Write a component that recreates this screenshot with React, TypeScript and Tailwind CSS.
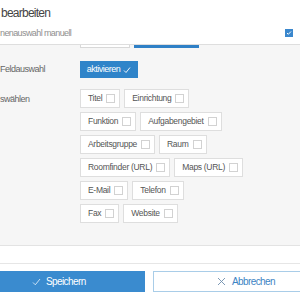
import React from "react";

const Box = () => <span className="inline-block w-[9px] h-[9px] border border-[#d2d2d2] bg-white shrink-0" />;

const Chip = ({ label }: { label: string }) => (
  <div className="h-[19px] flex items-center gap-[4px] pl-[7px] pr-[4px] border border-[#dedede] bg-white text-[8.5px] tracking-[-0.3px] text-[#555]">
    <span>{label}</span>
    <Box />
  </div>
);

const rows: string[][] = [
  ["Titel", "Einrichtung"],
  ["Funktion", "Aufgabengebiet"],
  ["Arbeitsgruppe", "Raum"],
  ["Roomfinder (URL)", "Maps (URL)"],
  ["E-Mail", "Telefon"],
  ["Fax", "Website"],
];

export default function App() {
  return (
    <div className="w-[300px] h-[300px] overflow-hidden bg-white relative" style={{ fontFamily: '"Liberation Sans", Arial, sans-serif' }}>
      {/* header */}
      <div className="h-[45px] border-b border-[#dedede] pl-[1px] pr-[7px]">
        <div className="pt-[5px] text-[12px] tracking-[-0.75px] text-[#444] leading-[16px]">bearbeiten</div>
        <div className="mt-[7px] flex items-center justify-between">
          <span className="text-[9px] tracking-[-0.6px] text-[#8f8f8f] leading-[10px] -ml-[1px]">nenauswahl manuell</span>
          <span className="w-[8px] h-[8px] bg-[#3a87cd] flex items-center justify-center">
            <svg width="6" height="6" viewBox="0 0 6 6"><path d="M1 3l1.3 1.3L5 1.5" stroke="white" strokeWidth="1" fill="none" /></svg>
          </span>
        </div>
      </div>
      {/* grey body */}
      <div className="h-[201px] bg-[#f6f6f6] border-b border-[#e3e3e3]">
        <div className="flex pl-[80px] gap-[4px]">
          <div className="w-[50px] h-[3px] bg-white border border-t-0 border-[#d8d8d8]" />
          <div className="w-[65px] h-[3px] bg-[#2f80c6]" />
        </div>
        <div className="mt-[13px] flex items-center h-[17px]">
          <div className="w-[80px] text-[9px] tracking-[-0.5px] text-[#666]">Feldauswahl</div>
          <div className="h-[17px] w-[58px] bg-[#2f84c9] flex items-center justify-center gap-[3px] text-white text-[9px] tracking-[-0.5px]">
            <span>aktivieren</span>
            <svg width="8" height="8" viewBox="0 0 8 8"><path d="M1 4.5l2 2L7 1.5" stroke="white" strokeWidth="0.9" fill="none" /></svg>
          </div>
        </div>
        <div className="mt-[11px] flex">
          <div className="w-[80px] text-[9px] tracking-[-0.5px] text-[#666] pt-[4px]">swählen</div>
          <div className="flex flex-col gap-[4px]">
            {rows.map((r, i) => (
              <div key={i} className="flex gap-[4px]">
                {r.map((l) => (
                  <Chip key={l} label={l} />
                ))}
              </div>
            ))}
          </div>
        </div>
      </div>
      {/* footer */}
      <div className="h-[17px]" />
      <div className="border-t border-[#e6e6e6] pt-[7px] flex gap-[8px]">
        <button className="w-[145px] h-[21px] bg-[#3a8bcf] flex items-center gap-[5px] pl-[32px] text-white text-[10px] tracking-[-0.6px]">
          <svg width="9" height="8" viewBox="0 0 9 8"><path d="M1 4.5l2.3 2.3L8 1" stroke="#d8eaf8" strokeWidth="0.9" fill="none" /></svg>
          <span>Speichern</span>
        </button>
        <button className="flex-1 -mr-[20px] h-[21px] bg-white border border-[#a9cde8] flex items-center gap-[6px] pl-[63px] text-[#3d84c4] text-[10px] tracking-[-0.6px]">
          <svg width="9" height="9" viewBox="0 0 9 9"><path d="M1 1l7 7M8 1L1 8" stroke="#6f8fae" strokeWidth="0.9" fill="none" /></svg>
          <span>Abbrechen</span>
        </button>
      </div>
    </div>
  );
}
